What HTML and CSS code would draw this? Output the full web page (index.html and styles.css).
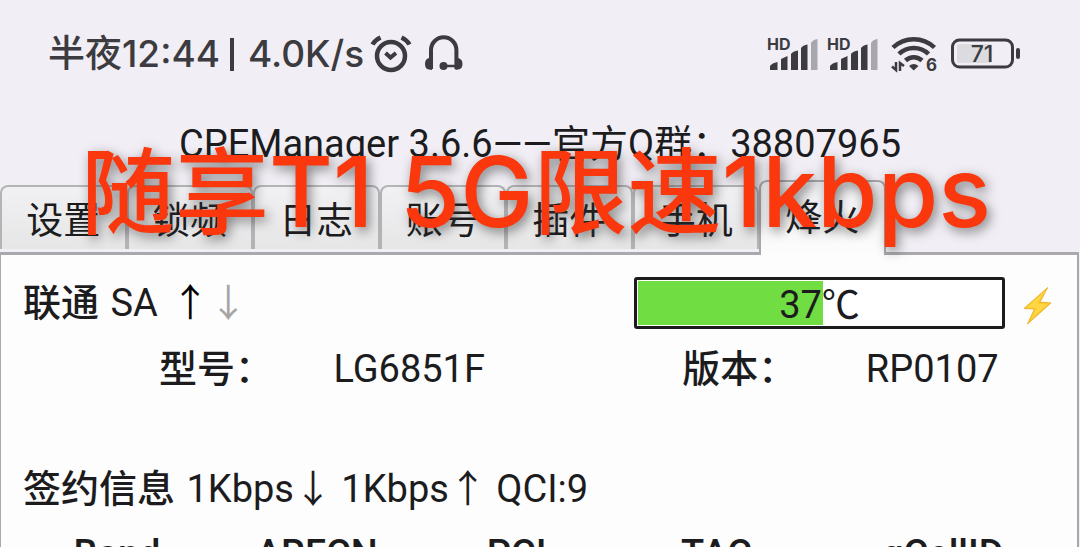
FILE: index.html
```
<!DOCTYPE html>
<html lang="zh-CN">
<head>
    <meta charset="UTF-8">
    <meta name="viewport" content="width=device-width, initial-scale=1.0">
    <title>CPEManager 3.6.6</title>
    <link rel="stylesheet" href="styles.css">
</head>
<body>
    <div class="status-bar">
        <div class="status-left">
            <span>半夜12:44</span>
            <span class="divider"></span>
            <span>4.0K/s</span>
            <svg class="alarm-icon" width="42" height="40" viewBox="0 0 42 40" fill="none" stroke="currentColor" stroke-width="4.500">
                <circle cx="21" cy="22" r="14"/>
                <path d="M15.500 19l5 4.500 5.500-4.500" stroke-width="4"/>
                <path d="M2.500 10.500Q5 6 10.500 3.500M31.500 3.500Q37 6 39.500 10.500"/>
            </svg>
            <svg class="headset-icon" width="40" height="40" viewBox="0 0 40 40" fill="none" stroke="currentColor" stroke-width="4">
                <path d="M7 35V16a12.700 12.700 0 0 1 25.400 0V35"/>
                <path d="M19 32H33" stroke-width="2.500"/>
                <circle cx="19.500" cy="32" r="4" fill="currentColor" stroke="none"/>
                <path d="M8 24H5Q1 25 1 30T5 35.500L8 36ZM31.500 24H34Q38.500 25 38.500 30T34 35.500L31.500 36Z" fill="currentColor" stroke="none"/>
            </svg>
        </div>
        <div class="status-right">
            <svg width="50" height="34" viewBox="0 0 50 34" fill="currentColor">
                <text class="hd-text" x="-1" y="13">HD</text>
                <path d="M2 33V29Q4 26 9.500 25V33ZM13 33V22L19.500 19V33ZM23 33V17Q25 14 30 13.500V33ZM33 33V11Q35 8 39.500 7.500V33Z"/>
                <path d="M43 33V6Q45 2.500 49.500 2V33Z" opacity="0.4"/>
            </svg>
            <svg width="50" height="34" viewBox="0 0 50 34" fill="currentColor">
                <text class="hd-text" x="-1" y="13">HD</text>
                <path d="M2 33V29Q4 26 9.500 25V33ZM13 33V22L19.500 19V33ZM23 33V17Q25 14 30 13.500V33ZM33 33V11Q35 8 39.500 7.500V33Z"/>
                <path d="M43 33V6Q45 2.500 49.500 2V33Z" opacity="0.4"/>
            </svg>
            <svg class="wifi-icon" width="50" height="38" viewBox="0 0 50 38" fill="none" stroke="currentColor" stroke-width="4.500">
                <path d="M3 12.500a30 30 0 0 1 41.500 0M9 19a21 21 0 0 1 29.500 0M15.500 25.500a12 12 0 0 1 16.500 0"/>
                <path d="M19 31Q23.700 27 28.500 31L23.700 35.500Z" fill="currentColor" stroke="none"/>
                <path d="M6 27V35L2 31.500M10 36V28L14 31" stroke-width="2.500"/>
                <text class="wifi-text" x="36" y="36">6</text>
            </svg>
            <svg width="70" height="34" viewBox="0 0 70 34">
                <rect x="7" y="7" width="35" height="19" rx="2" fill="#dcdbdf"/>
                <rect x="2.500" y="3" width="60" height="27" rx="7" fill="none" stroke="currentColor" stroke-width="3"/>
                <rect x="66" y="11" width="4" height="11" rx="2" fill="currentColor"/>
                <text class="battery-text" x="32" y="25">71</text>
            </svg>
        </div>
    </div>

    <h1 class="title">CPEManager 3.6.6——官方Q群：38807965</h1>

    <div class="tabs" role="tablist">
        <button class="tab" role="tab">设置</button>
        <button class="tab" role="tab">锁频</button>
        <button class="tab" role="tab">日志</button>
        <button class="tab" role="tab">账号</button>
        <button class="tab" role="tab">插件</button>
        <button class="tab" role="tab">手机</button>
        <button class="tab active" role="tab" aria-selected="true">烽火</button>
    </div>

    <div class="panel">
        <div class="network-row">
            <div class="network"><span class="label">联通</span> SA <span class="up">↑</span><span class="down">↓</span></div>
            <div class="temp-group">
                <div class="temp-bar">
                    <div class="temp-fill" style="width: 51%"></div>
                    <span class="temp-value">37℃</span>
                </div>
                <svg class="bolt-icon" width="30" height="38" viewBox="0 0 30 38">
                    <path d="M25.700 0.500L2 21.500L12.500 22L5.500 37L29 16L18 15Z" fill="#fdc92e" stroke="#eeb42c" stroke-linejoin="round"/>
                    <path d="M24 3L5 20.500L15 20.500L9 31L25.500 17.500L15 16.500Z" fill="#ffd744"/>
                </svg>
            </div>
        </div>

        <div class="model-row">
            <span class="label">型号：</span>
            <span>LG6851F</span>
            <span class="label">版本：</span>
            <span>RP0107</span>
        </div>

        <div class="plan-row"><span class="label">签约信息</span> 1Kbps↓ 1Kbps↑ QCI:9</div>

        <table class="cells">
            <tr>
                <th>Band</th>
                <th>ARFCN</th>
                <th>PCI</th>
                <th>TAC</th>
                <th class="wide">gCellID</th>
            </tr>
        </table>
    </div>

    <div class="caption"><span class="cjk">随享</span>T1 5G<span class="cjk">限速</span>1kbps</div>
</body>
</html>
```
FILE: styles.css
```
:root {
    --page-bg: #f1eff5;
    --panel-bg: #fdfdfd;
    --line: #a9a9ad;
    --text: #1c1c1e;
    --status: #3c3b40;
    --green: #70dd42;
    --red: #fa370d;
}

* {
    box-sizing: border-box;
}

body {
    margin: 0;
    height: 100vh;
    overflow: hidden;
    position: relative;
    display: flex;
    flex-direction: column;
    background: var(--page-bg);
    color: var(--text);
    font-family: Roboto, "Noto Sans CJK SC", sans-serif;
    font-size: 38px;
    line-height: 52px;
}

svg {
    overflow: visible;
}

.status-bar {
    display: flex;
    justify-content: space-between;
    align-items: center;
    height: 108px;
    flex-shrink: 0;
    padding: 0 60px 0 48px;
    color: var(--status);
    font-family: Inter, "Noto Sans CJK SC", sans-serif;
    font-size: 37px;
    font-weight: 500;
}

.status-left,
.status-right {
    display: flex;
    align-items: center;
}

.divider {
    width: 4px;
    height: 33px;
    margin: 0 14px 0 10px;
    background: var(--status);
}

.alarm-icon {
    margin-left: 6px;
}

.headset-icon {
    margin-left: 12px;
}

.status-right {
    gap: 10px;
}

.hd-text {
    font-size: 16px;
    font-weight: 700;
}

.wifi-icon {
    margin-left: 2px;
}

.wifi-text {
    font-size: 17px;
    font-weight: 700;
    fill: currentColor;
    stroke: none;
}

.battery-text {
    font-size: 23px;
    font-weight: 500;
    fill: currentColor;
    text-anchor: middle;
}

.title {
    margin: 10px 0;
    font-size: 38px;
    font-weight: 400;
    text-align: center;
}

.tabs {
    display: grid;
    grid-template-columns: repeat(7, 1fr);
    align-items: end;
    width: 82%;
    height: 75px;
    flex-shrink: 0;
}

.tab {
    height: 64px;
    margin-bottom: 6px;
    padding: 8px 0 0;
    background: linear-gradient(to bottom, #f1f0f2, #e6e6e7);
    border: 2px solid #b4b4b7;
    border-bottom: none;
    border-radius: 8px 8px 0 0;
    color: var(--text);
    font-family: inherit;
    font-size: 37px;
    line-height: 52px;
}

.tab.active {
    height: 75px;
    margin-bottom: 0;
    padding: 0;
    position: relative;
    z-index: 1;
    background: linear-gradient(to bottom, #f1f0f3, var(--panel-bg));
    border-color: var(--line);
}

.panel {
    flex: 1 0 auto;
    margin: -3px 1px 0 0;
    padding: 22px 0 0;
    background: var(--panel-bg);
    border: 1px solid var(--line);
    border-top-width: 3px;
    border-right-width: 2px;
}

.label {
    margin-right: 2px;
    font-weight: 500;
}

.network-row {
    display: flex;
    justify-content: space-between;
    align-items: center;
    padding: 0 25px 0 22px;
}

.up {
    margin-left: 4px;
    color: #000;
}

.down {
    color: #a5a5a5;
}

.temp-group {
    display: flex;
    align-items: center;
    flex: 0 0 418px;
    gap: 17px;
}

.temp-bar {
    display: grid;
    flex: 1;
    height: 52px;
    padding: 1px;
    border: 3px solid var(--text);
    border-radius: 3px;
    background: #fff;
}

.temp-fill,
.temp-value {
    grid-area: 1 / 1;
}

.temp-fill {
    height: 44px;
    background: var(--green);
}

.temp-value {
    line-height: 48px;
    text-align: center;
}

.bolt-icon {
    margin-top: 6px;
}

.model-row {
    display: grid;
    grid-template-columns: 19fr 38fr 20fr 23fr;
    margin-top: 14px;
    padding-left: 158px;
}

.plan-row {
    margin-top: 68px;
    padding-left: 22px;
}

.cells {
    width: 100%;
    margin-top: 13px;
    padding: 0 8px 0 16px;
    border-spacing: 0;
    table-layout: fixed;
}

.cells th {
    width: 19%;
    padding: 0;
    font-weight: 500;
}

.cells .wide {
    width: 24%;
}

.caption {
    position: absolute;
    top: 127px;
    left: 0;
    right: 0;
    z-index: 2;
    padding-right: 8px;
    color: var(--red);
    font-family: Inter, "Noto Sans CJK SC", sans-serif;
    font-size: 98px;
    font-weight: 500;
    line-height: 130px;
    text-align: center;
    white-space: nowrap;
    text-shadow: 3px 4px 12px rgba(50, 50, 50, 0.6);
    pointer-events: none;
}

.caption .cjk {
    font-size: 94px;
}
```
